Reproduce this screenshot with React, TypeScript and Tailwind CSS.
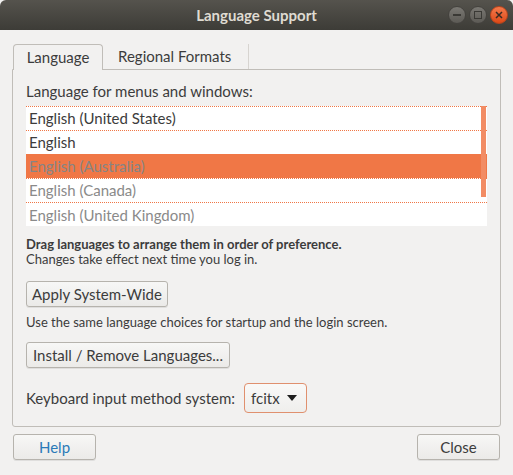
import React from 'react'

const langs = [
  { name: 'English (United States)', tone: 'text-[#3c3c3c]' },
  { name: 'English', tone: 'text-[#3c3c3c]' },
  { name: 'English (Australia)', tone: 'text-[#858585]', selected: true },
  { name: 'English (Canada)', tone: 'text-[#8a8a8a]' },
  { name: 'English (United Kingdom)', tone: 'text-[#8a8a8a]' },
]

const btn =
  'rounded-[3px] border border-[#b6b3ad] bg-gradient-to-b from-[#f7f7f6] to-[#ebeae8] shadow-[0_1px_0_rgba(0,0,0,0.08)]'

const App = () => {
  return (
    <div className="w-[513px] h-[475px] bg-[#f2f1f0] font-['Lato','Noto_Sans',sans-serif] text-[#3c3c3c] overflow-hidden">
      {/* title bar */}
      <div className="relative h-[30px] rounded-t-[6px] bg-gradient-to-b from-[#55534d] to-[#3d3c37] flex items-center justify-center">
        <span className="text-[15px] font-bold text-[#dfdbd2]">Language Support</span>
        <div className="absolute right-[5px] top-[6px] flex gap-[3px]">
          <div className="w-[18px] h-[18px] rounded-full bg-gradient-to-b from-[#7a7873] to-[#5c5a55] border border-[#44423e] flex items-center justify-center">
            <div className="w-[8px] h-[1.5px] bg-[#3a3935]" />
          </div>
          <div className="w-[18px] h-[18px] rounded-full bg-gradient-to-b from-[#7a7873] to-[#5c5a55] border border-[#44423e] flex items-center justify-center">
            <div className="w-[8px] h-[8px] border-[1.5px] border-[#3a3935]" />
          </div>
          <div className="w-[18px] h-[18px] rounded-full bg-gradient-to-b from-[#f4794a] to-[#dd4814] border border-[#b9441c] flex items-center justify-center">
            <svg width="8" height="8" viewBox="0 0 8 8">
              <path d="M1 1L7 7M7 1L1 7" stroke="#3a2a22" strokeWidth="1.5" />
            </svg>
          </div>
        </div>
      </div>

      <div className="px-[12px] pt-[13px]">
        {/* tabs */}
        <div className="flex items-end h-[26px]">
          <div className="relative z-10 -mb-px h-[26px] ml-[1px] w-[90px] rounded-t-[4px] border border-[#c0bdb8] border-b-0 bg-[#f2f1f0] flex items-center justify-center text-[15px]">
            Language
          </div>
          <div className="h-[25px] pl-[15px] pr-[17px] border-r border-[#d7d4d0] flex items-center text-[15px]">
            Regional Formats
          </div>
        </div>

        {/* panel */}
        <div className="h-[358px] rounded-b-[3px] border border-[#c0bdb8] px-[13px] pt-[12px]">
          <div className="text-[15px] leading-[18px]">Language for menus and windows:</div>
          <div className="relative mt-[6px] w-[461px] bg-white">
            {langs.map((l, i) => (
              <div
                key={l.name}
                className={`h-[24px] pl-[3px] flex items-center text-[15px] border-t border-dotted border-[#f07746] ${l.selected ? 'bg-[#f07746]' : ''} ${l.tone}`}
              >
                {i === 4 ? <span className="pt-[1px]">{l.name}</span> : l.name}
              </div>
            ))}
            <div className="absolute right-[1px] top-0 w-[5px] h-[91px] bg-[#f28c64]" />
          </div>

          <div className="mt-[11px] text-[13px] leading-[15px]">
            <div className="font-bold">Drag languages to arrange them in order of preference.</div>
            <div>Changes take effect next time you log in.</div>
          </div>

          <button className={`${btn} mt-[14px] h-[26px] px-[5px] text-[15px] text-[#3c3c3c]`}>
            Apply System-Wide
          </button>

          <div className="mt-[8px] text-[13px] leading-[15px]">
            Use the same language choices for startup and the login screen.
          </div>

          <button className={`${btn} mt-[12px] h-[26px] px-[6px] text-[15px] text-[#3c3c3c]`}>
            Install / Remove Languages...
          </button>

          <div className="mt-[15px] flex items-center gap-[9px]">
            <span className="text-[15px]">Keyboard input method system:</span>
            <div className="h-[30px] w-[63px] rounded-[4px] border border-[#e0906e] bg-gradient-to-b from-[#f9f9f8] to-[#efeeec] flex items-center justify-between pl-[6px] pr-[9px] text-[15px]">
              fcitx
              <svg width="10" height="6" viewBox="0 0 10 6">
                <path d="M0 0H10L5 6Z" fill="#1e1e1e" />
              </svg>
            </div>
          </div>
        </div>

        {/* bottom buttons */}
        <div className="mt-[7px] flex justify-between pl-[1px] pr-[1px]">
          <button className={`${btn} h-[26px] w-[83px] text-[15px] text-[#2a7ab8]`}>Help</button>
          <button className={`${btn} h-[26px] w-[83px] text-[15px] text-[#3c3c3c]`}>Close</button>
        </div>
      </div>
    </div>
  )
}

export default App
